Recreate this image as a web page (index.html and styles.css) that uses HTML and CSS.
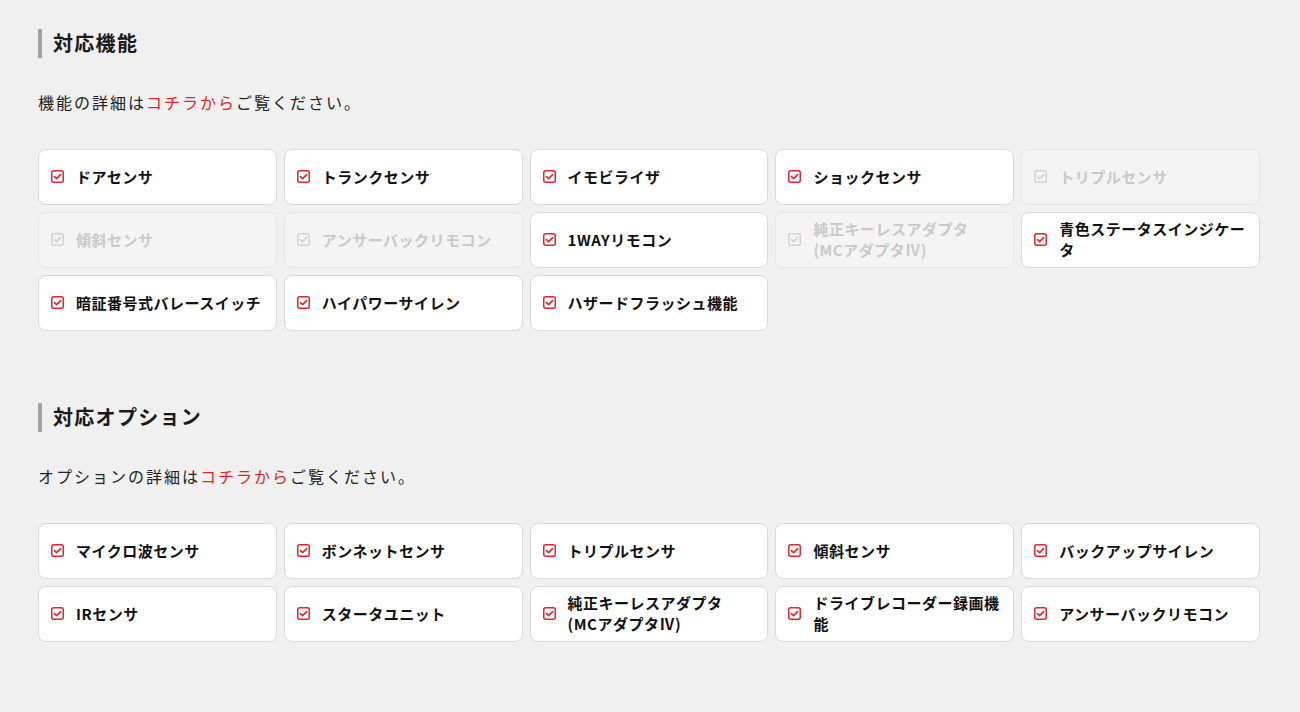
FILE: index.html
```html
<!DOCTYPE html>
<html lang="ja">
<head>
    <meta charset="UTF-8">
    <meta name="viewport" content="width=device-width, initial-scale=1.0">
    <title>対応機能・対応オプション</title>
    <link rel="stylesheet" href="styles.css">
</head>
<body>
    <svg width="0" height="0" class="defs">
        <symbol id="check" viewBox="0 0 13 13">
            <rect x="0.75" y="0.75" width="11.5" height="11.5" rx="2" fill="none" stroke="currentColor" stroke-width="1.5"/>
            <polyline points="3.4,6.6 5.6,8.6 9.6,4.6" fill="none" stroke="currentColor" stroke-width="1.6" stroke-linecap="round" stroke-linejoin="round"/>
        </symbol>
    </svg>

    <div class="page">
        <section class="spec-section">
            <h2 class="spec-title">対応機能</h2>
            <p class="spec-lead">機能の詳細は<a href="#">コチラから</a>ご覧ください。</p>
            <ul class="spec-list">
                <li class="spec-item"><svg class="spec-icon"><use href="#check"/></svg><span>ドアセンサ</span></li>
                <li class="spec-item"><svg class="spec-icon"><use href="#check"/></svg><span>トランクセンサ</span></li>
                <li class="spec-item"><svg class="spec-icon"><use href="#check"/></svg><span>イモビライザ</span></li>
                <li class="spec-item"><svg class="spec-icon"><use href="#check"/></svg><span>ショックセンサ</span></li>
                <li class="spec-item is-off"><svg class="spec-icon"><use href="#check"/></svg><span>トリプルセンサ</span></li>
                <li class="spec-item is-off"><svg class="spec-icon"><use href="#check"/></svg><span>傾斜センサ</span></li>
                <li class="spec-item is-off"><svg class="spec-icon"><use href="#check"/></svg><span>アンサーバックリモコン</span></li>
                <li class="spec-item"><svg class="spec-icon"><use href="#check"/></svg><span>1WAYリモコン</span></li>
                <li class="spec-item is-off"><svg class="spec-icon"><use href="#check"/></svg><span>純正キーレスアダプタ<br>(MCアダプタⅣ)</span></li>
                <li class="spec-item"><svg class="spec-icon"><use href="#check"/></svg><span>青色ステータスインジケー<br>タ</span></li>
                <li class="spec-item"><svg class="spec-icon"><use href="#check"/></svg><span>暗証番号式バレースイッチ</span></li>
                <li class="spec-item"><svg class="spec-icon"><use href="#check"/></svg><span>ハイパワーサイレン</span></li>
                <li class="spec-item"><svg class="spec-icon"><use href="#check"/></svg><span>ハザードフラッシュ機能</span></li>
            </ul>
        </section>

        <section class="spec-section">
            <h2 class="spec-title">対応オプション</h2>
            <p class="spec-lead">オプションの詳細は<a href="#">コチラから</a>ご覧ください。</p>
            <ul class="spec-list">
                <li class="spec-item"><svg class="spec-icon"><use href="#check"/></svg><span>マイクロ波センサ</span></li>
                <li class="spec-item"><svg class="spec-icon"><use href="#check"/></svg><span>ボンネットセンサ</span></li>
                <li class="spec-item"><svg class="spec-icon"><use href="#check"/></svg><span>トリプルセンサ</span></li>
                <li class="spec-item"><svg class="spec-icon"><use href="#check"/></svg><span>傾斜センサ</span></li>
                <li class="spec-item"><svg class="spec-icon"><use href="#check"/></svg><span>バックアップサイレン</span></li>
                <li class="spec-item"><svg class="spec-icon"><use href="#check"/></svg><span>IRセンサ</span></li>
                <li class="spec-item"><svg class="spec-icon"><use href="#check"/></svg><span>スタータユニット</span></li>
                <li class="spec-item"><svg class="spec-icon"><use href="#check"/></svg><span>純正キーレスアダプタ<br>(MCアダプタⅣ)</span></li>
                <li class="spec-item"><svg class="spec-icon"><use href="#check"/></svg><span>ドライブレコーダー録画機<br>能</span></li>
                <li class="spec-item"><svg class="spec-icon"><use href="#check"/></svg><span>アンサーバックリモコン</span></li>
            </ul>
        </section>
    </div>
</body>
</html>
```

FILE: styles.css
```css
/* spec page */
body {
    margin: 0;
    background-color: #f0f0f0;
    color: #222;
    font-family: "Noto Sans CJK JP", "Noto Sans", sans-serif;
}

.defs {
    position: absolute;
}

.page {
    width: 1222px;
    padding: 29px 0 40px 38px;
}

.spec-section + .spec-section {
    margin-top: 72px;
}

.spec-title {
    margin: 0;
    height: 29px;
    padding-left: 11px;
    border-left: 4px solid #a3a3a3;
    font-size: 20px;
    line-height: 28px;
    font-weight: 700;
    letter-spacing: 1.3px;
    color: #1a1a1a;
}

.spec-lead {
    margin: 32px 0 35px;
    font-size: 16px;
    line-height: 24px;
    letter-spacing: 2px;
}

.spec-lead a {
    color: #e2252d;
    text-decoration: none;
}

.spec-list {
    list-style: none;
    margin: 0;
    padding: 0;
    display: grid;
    grid-template-columns: repeat(5, 1fr);
    gap: 7px;
}

.spec-item {
    display: flex;
    align-items: center;
    gap: 12px;
    height: 56px;
    box-sizing: border-box;
    padding: 0 6px 2px 12px;
    background-color: #fff;
    border: 1px solid #d9d9d9;
    border-radius: 8px;
    font-size: 15px;
    font-weight: 700;
    line-height: 21px;
    letter-spacing: 0.5px;
    color: #111;
}

.spec-icon {
    flex: none;
    width: 13px;
    height: 13px;
    color: #e2252d;
}

.spec-item.is-off {
    background-color: #f4f4f4;
    border-color: #e6e6e6;
    color: #c9c9c9;
}

.spec-item.is-off .spec-icon {
    color: #d2d2d2;
}
```
